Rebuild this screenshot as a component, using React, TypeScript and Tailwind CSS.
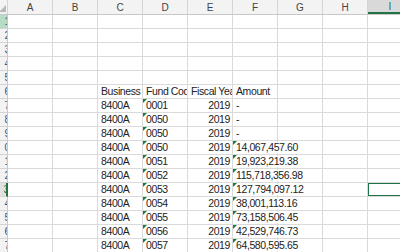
const cols = ["A", "B", "C", "D", "E", "F", "G", "H", "I"];

const fundCodes = ["0001", "0050", "0050", "0050", "0051", "0052", "0053", "0054", "0055", "0056", "0057"];
const amounts = [
  "-",
  "-",
  "-",
  "14,067,457.60",
  "19,923,219.38",
  "115,718,356.98",
  "127,794,097.12",
  "38,001,113.16",
  "73,158,506.45",
  "42,529,746.73",
  "64,580,595.65",
];

function Flag() {
  return (
    <span className="absolute top-0 left-0 w-0 h-0 border-t-[4px] border-r-[4px] border-t-[#1f7a3e] border-r-transparent" />
  );
}

function Cell({
  children,
  right,
  flag,
  spill,
  selected,
}: {
  children?: React.ReactNode;
  right?: boolean;
  flag?: boolean;
  spill?: boolean;
  selected?: boolean;
}) {
  return (
    <div
      className={`relative w-[45px] h-[14px] shrink-0 border-r border-b border-[#dadada] flex items-end pb-[1px] ${
        right ? "justify-end pr-[2px]" : "pl-[3px]"
      } ${spill ? "overflow-visible" : "overflow-hidden"}`}
    >
      {flag && <Flag />}
      {children && (
        <span className={`whitespace-nowrap leading-[11px] ${spill ? "relative z-10 bg-white pr-[1px]" : ""}`}>
          {children}
        </span>
      )}
      {selected && <div className="absolute top-[-1px] left-[-1px] right-[-2px] bottom-[-1px] border-2 border-[#217346] z-20" />}
    </div>
  );
}

export default function App() {
  const rows = Array.from({ length: 17 }, (_, i) => i + 1);
  return (
    <div
      className="w-[400px] h-[252px] overflow-hidden bg-white text-[10.5px] tracking-[-0.4px] text-[#222]"
      style={{ fontFamily: '"Liberation Sans", Arial, sans-serif' }}
    >
      <div className="flex h-[15px] bg-[#f3f3f3] border-b border-[#c8c8c8]">
        <div className="relative w-[8px] shrink-0 border-r border-[#d4d4d4]">
          <span className="absolute bottom-[2px] right-[1px] w-0 h-0 border-b-[7px] border-l-[7px] border-b-[#b9b9b9] border-l-transparent" />
        </div>
        {cols.map((c) => (
          <div
            key={c}
            className={`w-[45px] shrink-0 flex items-center justify-center border-r border-[#d4d4d4] text-[10px] tracking-normal ${
              c === "I" ? "bg-[#d9d9d9] text-[#217346] border-b-2 border-b-[#217346]" : "text-[#444]"
            }`}
          >
            {c}
          </div>
        ))}
      </div>
      {rows.map((r) => {
        const d = r >= 7 ? r - 7 : -1;
        return (
          <div key={r} className="flex">
            <div
              className={`w-[8px] h-[14px] shrink-0 overflow-hidden flex items-center justify-end border-b border-[#d4d4d4] text-[10px] tracking-normal leading-none ${
                r === 13
                  ? "bg-[#e1e1e1] text-[#217346] border-r-2 border-r-[#217346]"
                  : r === 1
                  ? "bg-[#b7dcc6] text-[#2f4f8f] border-r border-r-[#c8c8c8]"
                  : "bg-[#f3f3f3] text-[#2f4f8f] border-r border-r-[#c8c8c8]"
              }`}
            >
              <span className="-mr-[3px]">{r % 10}</span>
            </div>
            <Cell />
            <Cell />
            <Cell>{r === 6 ? "Business Unit" : d >= 0 ? "8400A" : null}</Cell>
            <Cell flag={d >= 0}>{r === 6 ? "Fund Code" : d >= 0 ? fundCodes[d] : null}</Cell>
            <Cell right={d >= 0}>{r === 6 ? "Fiscal Year" : d >= 0 ? "2019" : null}</Cell>
            <Cell flag={d >= 3} spill={d >= 3}>
              {r === 6 ? "Amount" : d >= 0 ? amounts[d] : null}
            </Cell>
            <Cell />
            <Cell />
            <Cell selected={r === 13} />
          </div>
        );
      })}
    </div>
  );
}
